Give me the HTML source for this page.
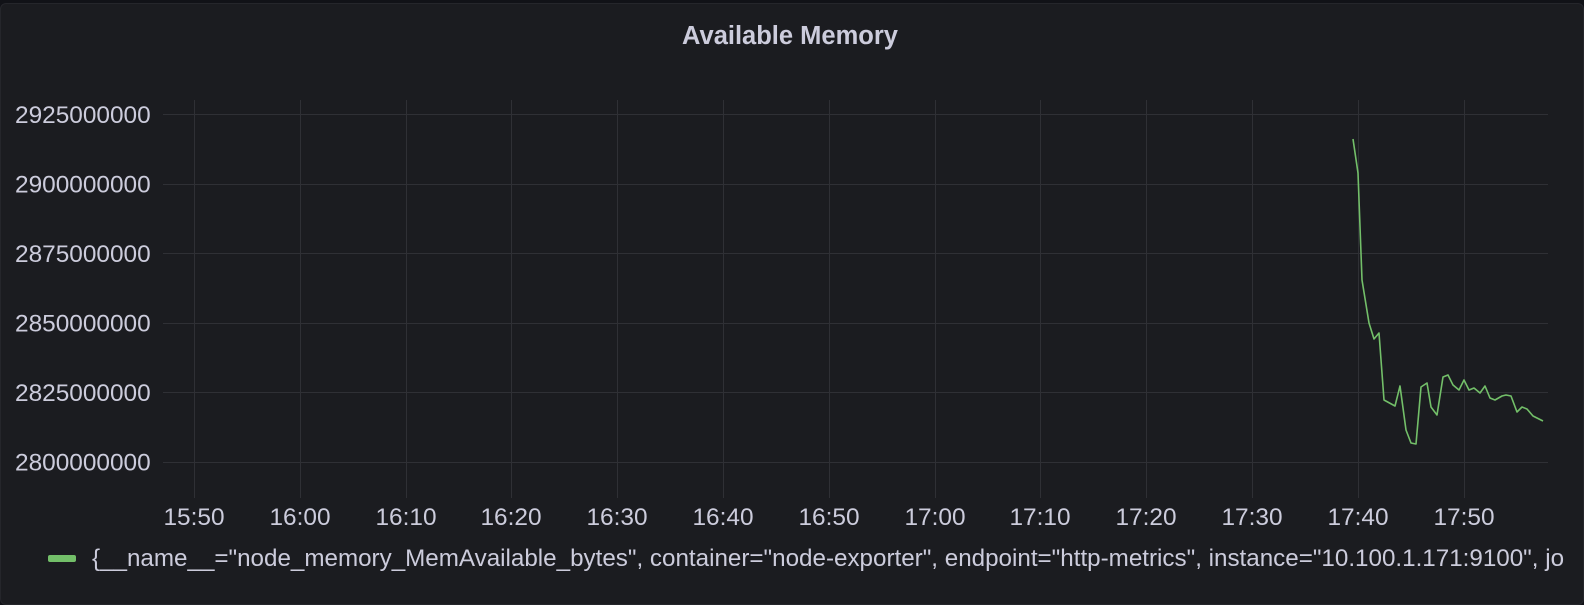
<!DOCTYPE html>
<html><head><meta charset="utf-8"><style>
html,body{margin:0;padding:0;background:#111217;}
body{width:1584px;height:592px;overflow:hidden;position:relative;font-family:"Liberation Sans",sans-serif;}
.panel{position:absolute;left:0;top:3px;width:1582px;height:600px;background:#1b1c20;border:1px solid #25262b;border-radius:6px;}
svg{position:absolute;left:0;top:0;}
</style></head><body>
<div class="panel"></div>
<svg width="1584" height="592" viewBox="0 0 1584 592">
<text x="790" y="44" fill="#ccccdc" font-family="Liberation Sans, sans-serif" font-weight="bold" font-size="25.5" text-anchor="middle">Available Memory</text>
<g stroke="#2f3035" stroke-width="1">
<line x1="163" y1="114.5" x2="1548" y2="114.5"/>
<line x1="163" y1="184.5" x2="1548" y2="184.5"/>
<line x1="163" y1="253.5" x2="1548" y2="253.5"/>
<line x1="163" y1="323.5" x2="1548" y2="323.5"/>
<line x1="163" y1="392.5" x2="1548" y2="392.5"/>
<line x1="163" y1="462.5" x2="1548" y2="462.5"/>
</g>
<g stroke="#2f3035" stroke-width="1">
<line x1="194.5" y1="100" x2="194.5" y2="498"/>
<line x1="300.5" y1="100" x2="300.5" y2="498"/>
<line x1="406.5" y1="100" x2="406.5" y2="498"/>
<line x1="511.5" y1="100" x2="511.5" y2="498"/>
<line x1="617.5" y1="100" x2="617.5" y2="498"/>
<line x1="723.5" y1="100" x2="723.5" y2="498"/>
<line x1="829.5" y1="100" x2="829.5" y2="498"/>
<line x1="935.5" y1="100" x2="935.5" y2="498"/>
<line x1="1040.5" y1="100" x2="1040.5" y2="498"/>
<line x1="1146.5" y1="100" x2="1146.5" y2="498"/>
<line x1="1252.5" y1="100" x2="1252.5" y2="498"/>
<line x1="1358.5" y1="100" x2="1358.5" y2="498"/>
<line x1="1464.5" y1="100" x2="1464.5" y2="498"/>
</g>
<g fill="#ccccdc" font-family="Liberation Sans, sans-serif" font-size="24.4">
<text x="15" y="123">2925000000</text>
<text x="15" y="192.5">2900000000</text>
<text x="15" y="262">2875000000</text>
<text x="15" y="331.5">2850000000</text>
<text x="15" y="401">2825000000</text>
<text x="15" y="470.5">2800000000</text>
</g>
<g fill="#ccccdc" font-family="Liberation Sans, sans-serif" font-size="24.4" text-anchor="middle">
<text x="194" y="525">15:50</text><text x="300" y="525">16:00</text><text x="406" y="525">16:10</text>
<text x="511" y="525">16:20</text><text x="617" y="525">16:30</text><text x="723" y="525">16:40</text>
<text x="829" y="525">16:50</text><text x="935" y="525">17:00</text><text x="1040" y="525">17:10</text>
<text x="1146" y="525">17:20</text><text x="1252" y="525">17:30</text><text x="1358" y="525">17:40</text>
<text x="1464" y="525">17:50</text>
</g>
<polyline fill="none" stroke="#73bf69" stroke-width="1.6" stroke-linejoin="round" points="1353,139 1358,173 1362,280 1369,323 1374,339 1379,333 1384,400 1395,406 1400,386 1406,430 1411,443 1416,444 1421,387 1427,383 1431,407 1437,415 1443,377 1448,375 1453,385 1459,390 1464,380 1469,390 1474,388 1480,393 1485,386 1490,398 1495,400 1502,396 1506,395 1511,396 1517,412 1522,407 1527,409 1533,416 1543,421"/>
<rect x="48" y="555" width="28" height="7" rx="2" fill="#73bf69"/>
<text x="92" y="566" fill="#ccccdc" font-family="Liberation Sans, sans-serif" font-size="24.2">{__name__="node_memory_MemAvailable_bytes", container="node-exporter", endpoint="http-metrics", instance="10.100.1.171:9100", jo</text>
</svg>
</body></html>
